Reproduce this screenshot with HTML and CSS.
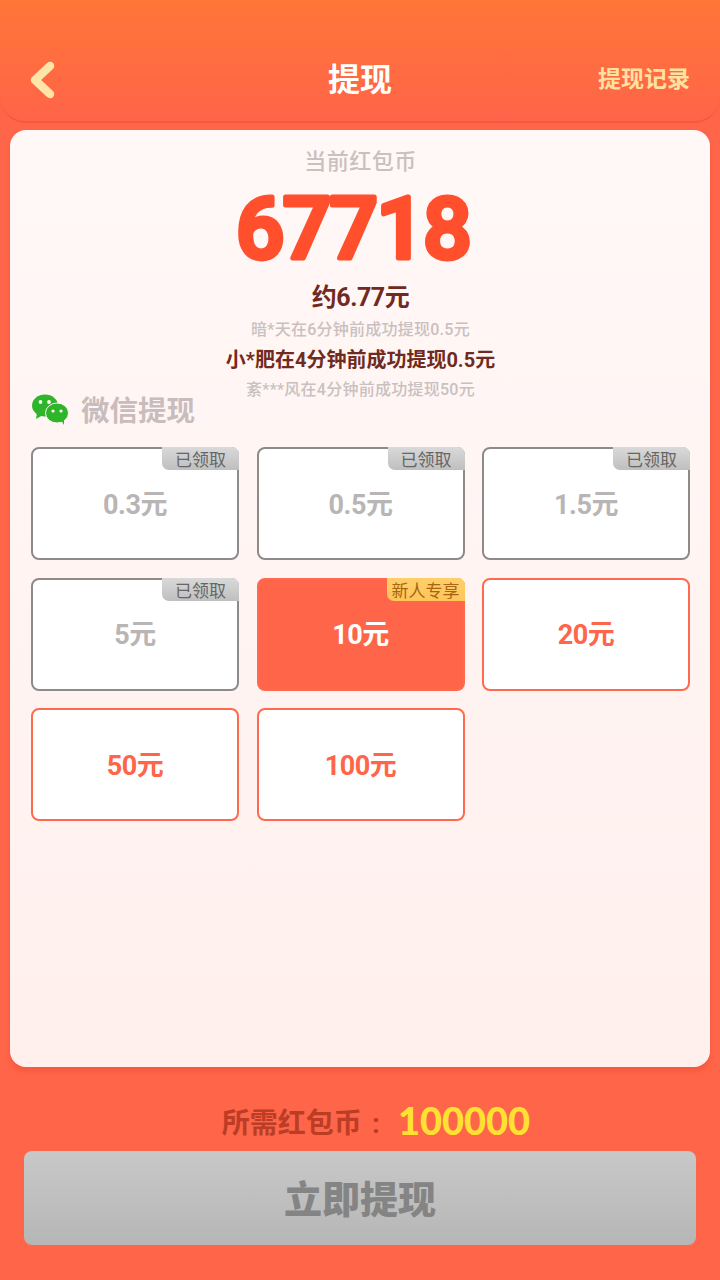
FILE: index.html
```html
<!DOCTYPE html>
<html lang="zh-CN">
  <head>
    <meta charset="utf-8" />
    <title>提现</title>
    <link rel="stylesheet" href="styles.css">
  </head>
  <body>
    <div class="page">
      <div class="header">
        <svg class="back" width="28" height="38" viewBox="0 0 28 38">
          <path d="M20 5 L5 19 L20 33" fill="none" stroke="#ffe6a8" stroke-width="8.5" stroke-linecap="round" stroke-linejoin="round" />
        </svg>
        <div class="title">提现</div>
        <div class="record">提现记录</div>
      </div>

      <div class="card">
        <div class="balance-label">当前红包币</div>
        <svg class="balance" width="400" height="106" viewBox="0 0 400 106">
          <text x="192" y="83" text-anchor="middle">67718</text>
        </svg>
        <div class="approx">约6.77元</div>
        <div class="notice">暗*天在6分钟前成功提现0.5元</div>
        <div class="notice current">小*肥在4分钟前成功提现0.5元</div>
        <div class="notice">紊***风在4分钟前成功提现50元</div>

        <div class="method">
          <svg class="wechat" width="38" height="32" viewBox="0 0 38 32">
            <ellipse cx="14" cy="11.5" rx="13" ry="11" fill="#2fb52a" />
            <path d="M6 19 L5 25 L12 21 Z" fill="#2fb52a" />
            <ellipse cx="26" cy="19" rx="11.5" ry="10" fill="#2fb52a" stroke="#fff3f0" stroke-width="1" />
            <path d="M30 26 L33 31 L33 24 Z" fill="#2fb52a" />
            <circle cx="9.5" cy="8" r="1.9" fill="#fff3f0" />
            <circle cx="18" cy="8" r="1.9" fill="#fff3f0" />
            <circle cx="22" cy="17" r="1.6" fill="#fff3f0" />
            <circle cx="30" cy="17" r="1.6" fill="#fff3f0" />
          </svg>
          <span class="method-name">微信提现</span>
        </div>

        <div class="options">
          <div class="option used">0.3元<span class="tag">已领取</span></div>
          <div class="option used">0.5元<span class="tag">已领取</span></div>
          <div class="option used">1.5元<span class="tag">已领取</span></div>
          <div class="option used">5元<span class="tag">已领取</span></div>
          <div class="option active">10元<span class="tag new">新人专享</span></div>
          <div class="option">20元</div>
          <div class="option">50元</div>
          <div class="option">100元</div>
        </div>
      </div>

      <div class="footer">
        <div class="need">所需红包币<span class="colon">:</span><span class="need-value">100000</span></div>
        <div class="submit">立即提现</div>
      </div>
    </div>
  </body>
</html>
```

FILE: styles.css
```css
body {
  margin: 0;
  font-family: "Roboto", "Noto Sans CJK SC", sans-serif;
}

.page {
  height: 1280px;
  background-color: #ff6549;
  display: flex;
  flex-direction: column;
}

.header {
  height: 123px;
  padding: 59px 30px 0;
  box-sizing: border-box;
  display: flex;
  align-items: flex-start;
  justify-content: space-between;
  position: relative;
  background: linear-gradient(#ff7638, #ff6449);
  border-bottom: 2px solid #f15a40;
  border-radius: 0 0 26px 26px;
}

.back {
  margin-top: 2px;
}

.title {
  position: absolute;
  left: 0;
  right: 0;
  top: 59px;
  text-align: center;
  font-size: 32px;
  line-height: 42px;
  font-weight: 700;
  color: #fff;
}

.record {
  font-size: 23px;
  line-height: 42px;
  font-weight: 700;
  color: #ffe1a0;
}

.card {
  height: 937px;
  margin: 7px 10px 0;
  padding: 19px 20px 0 21px;
  box-sizing: border-box;
  background: linear-gradient(#fff8f7, #fff0ed);
  border-radius: 16px;
  box-shadow: 0 5px 4px #f65a40;
}

.balance-label {
  text-align: center;
  font-size: 22px;
  line-height: 26px;
  letter-spacing: 0.5px;
  color: #c9c0c0;
  font-weight: 500;
}

.balance {
  display: block;
  margin: 0 auto;
}

.balance text {
  font-family: "Roboto", sans-serif;
  font-size: 85px;
  font-weight: 500;
  letter-spacing: -1.5px;
  fill: #ff4f2c;
  stroke: #ff4f2c;
  stroke-width: 5px;
  stroke-linejoin: round;
}

.approx {
  text-align: center;
  font-size: 25px;
  line-height: 34px;
  letter-spacing: -0.5px;
  font-weight: 700;
  color: #712a20;
}

.notice {
  text-align: center;
  font-size: 16px;
  line-height: 30px;
  letter-spacing: 0.25px;
  color: #c9c0c0;
  font-weight: 500;
}

.notice.current {
  font-size: 20px;
  letter-spacing: 0;
  font-weight: 700;
  color: #712a20;
}

.method {
  height: 34px;
  margin-top: -12px;
  display: flex;
  align-items: center;
  gap: 12px;
  font-size: 28.5px;
  font-weight: 700;
  color: #c9bcbc;
}

.method-name {
  padding-bottom: 4px;
}

.options {
  margin-top: 20px;
  display: grid;
  grid-template-columns: repeat(3, 208px);
  grid-auto-rows: 113px;
  gap: 17.5px;
}

.option {
  position: relative;
  display: flex;
  align-items: center;
  justify-content: center;
  box-sizing: border-box;
  padding-bottom: 3px;
  background-color: #fff;
  border: 2px solid #ff6a4e;
  border-radius: 8px;
  font-size: 27px;
  letter-spacing: -0.5px;
  font-weight: 700;
  color: #ff6549;
}

.option.used {
  border-color: #8f8a8a;
  color: #b9b5b5;
}

.option.active {
  background-color: #ff6549;
  color: #fff;
}

.tag {
  position: absolute;
  top: -2px;
  right: -2px;
  width: 77px;
  height: 23px;
  display: flex;
  align-items: center;
  justify-content: center;
  font-size: 17px;
  letter-spacing: 0;
  font-weight: 400;
  color: #666;
  background: linear-gradient(#d9d9d9, #bfbfbf);
  border-radius: 0 7px 0 7px;
}

.tag.new {
  width: 78px;
  color: #a8650f;
  background: linear-gradient(#ffcf6a, #ffc55a);
}

.footer {
  padding: 34px 24px 0;
}

.need {
  height: 38px;
  padding-left: 32px;
  text-align: center;
  font-size: 28px;
  line-height: 38px;
  font-weight: 700;
  color: #bb3d25;
}

.colon {
  display: inline-block;
  width: 28px;
  margin-right: 8px;
  text-align: center;
}

.need-value {
  font-family: "Lato", sans-serif;
  font-size: 38px;
  font-weight: 900;
  vertical-align: -2px;
  color: #ffe033;
}

.submit {
  height: 94px;
  margin-top: 12px;
  padding-bottom: 4px;
  box-sizing: border-box;
  display: flex;
  align-items: center;
  justify-content: center;
  border-radius: 8px;
  background: linear-gradient(#c8c8c8, #b6b6b6);
  font-size: 38px;
  font-weight: 900;
  color: #848484;
}
```
